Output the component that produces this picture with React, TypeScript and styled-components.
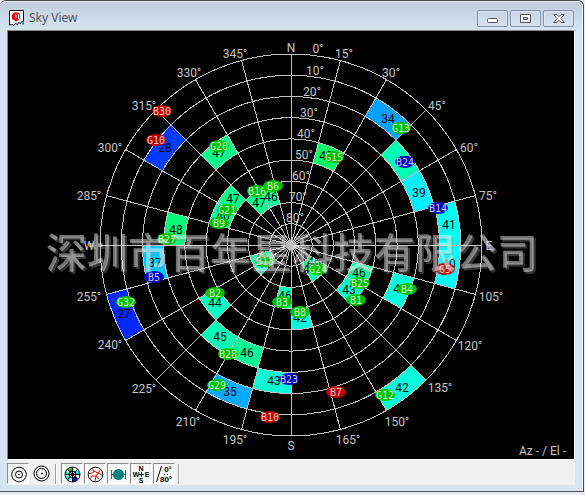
import React from "react";
import styled, { createGlobalStyle } from "styled-components";

const GlobalStyle = createGlobalStyle`
  * { box-sizing: border-box; }
  html, body, #root { height: 100%; }
  body { margin: 0; background: #e9ebee; overflow: hidden; }
`;

const Desktop = styled.div`
  height: 100%;
  display: flex;
  padding: 0 1px 3px 0;
`;

const Window = styled.main`
  flex: 1;
  min-width: 0;
  display: flex;
  flex-direction: column;
  padding: 0 8px 6px 7px;
  border: 1px solid #4a4a50;
  border-left: 0;
  border-radius: 6px 6px 0 0;
  background: linear-gradient(#bfcddc 0, #d7e4f1 30px, #d7e4f1 100%);
  box-shadow: inset -1px 0 #f4f9ff, inset 0 1px #dfe8f1;
`;

const TitleBar = styled.header`
  flex: none;
  height: 29px;
  padding: 5px 1px 0 2px;
  display: flex;
  align-items: center;
  gap: 4px;
`;

const Title = styled.h1`
  flex: 1;
  margin: 0;
  font: 400 12px/16px "Noto Sans", "Open Sans", sans-serif;
  color: #4d565f;
`;

const Controls = styled.div`
  display: flex;
  gap: 2px;
`;

const ControlButton = styled.button`
  width: 31px;
  height: 17px;
  padding: 0;
  display: grid;
  place-items: center;
  border: 1px solid #8191ae;
  border-radius: 2px;
  background: linear-gradient(#c9d6e5, #d5e1ee);
  box-shadow: inset 0 0 0 1px #d8e3ef;
`;

const Plot = styled.section`
  flex: 1;
  min-height: 0;
  display: flex;
  border: 1px solid;
  border-color: #858585 #ffffff #ffffff #858585;
  background: #000000;
`;

const Chart = styled.svg`
  flex: 1;
  min-width: 0;
  width: 100%;
  height: 100%;
  display: block;
`;

const Grid = styled.g`
  fill: none;
  stroke: #c0c0c0;
  stroke-width: 1px;
  shape-rendering: crispEdges;
`;

const AxisText = styled.text`
  font: 12px Roboto, "Liberation Sans", sans-serif;
  fill: #c4c4c4;
  text-anchor: middle;
`;

const CellText = styled(AxisText)`
  fill: #000000;
`;

const Readout = styled.text`
  font: 12px Roboto, "Liberation Sans", sans-serif;
  fill: #c4c4c4;
  text-anchor: end;
`;

const SatText = styled.text`
  font: 10px "DejaVu Sans Mono", monospace;
  fill: #ffffff;
  fill-opacity: 0.8;
  text-anchor: middle;
`;

const Watermark = styled.text`
  font: 500 41px "Noto Sans CJK SC", sans-serif;
  fill: #ffffff;
  fill-opacity: 0.45;
  text-anchor: middle;
  filter: drop-shadow(2px 2px 0 rgba(150, 150, 150, 0.8));
`;

const ToolBar = styled.div`
  flex: none;
  height: 25px;
  padding: 3px 0 1px;
  display: flex;
  gap: 1px;
  background: #f0f0f0;
`;

const ToolButton = styled.button<{ $on: boolean }>`
  width: 22px;
  height: 21px;
  padding: 0;
  display: grid;
  place-items: center;
  border: 1px solid;
  border-color: ${(p) => (p.$on ? "#8c8c8c #ffffff #ffffff #8c8c8c" : "transparent")};
  background: ${(p) => (p.$on ? "#f8f8f8" : "transparent")};
`;

const ToolDivider = styled.span`
  width: 2px;
  margin: 1px 3px 0 2px;
  border-left: 1px solid #a0a0a0;
  border-right: 1px solid #ffffff;
`;

const Icon = styled.svg`
  display: block;
`;

const IconText = styled.text<{ $size: number }>`
  font: 700 ${(p) => p.$size}px "Liberation Sans", sans-serif;
  fill: #000000;
  text-anchor: middle;
`;

const RING = 191 / 9;

const point = (az: number, r: number) => {
  const a = (az * Math.PI) / 180;
  return [r * Math.sin(a), -r * Math.cos(a)];
};

const sector = (az: number, inner: number) => {
  const r0 = inner * RING;
  const r1 = r0 + RING;
  const [ax, ay] = point(az, r0);
  const [bx, by] = point(az, r1);
  const [cx, cy] = point(az + 15, r1);
  const [dx, dy] = point(az + 15, r0);
  return `M${ax} ${ay}L${bx} ${by}A${r1} ${r1} 0 0 1 ${cx} ${cy}L${dx} ${dy}A${r0} ${r0} 0 0 0 ${ax} ${ay}Z`;
};

// azimuth start, inner ring, colour, signal value, value x, value y
type Cell = [number, number, string, number, number, number];
const cells: Cell[] = [
  [30, 7, "#00a0ff", 34, 97, -126],
  [45, 6, "#00ffb4", 45, 112, -84],
  [60, 6, "#00f0ff", 39, 128, -52],
  [75, 7, "#00fff0", 41, 158, -20],
  [90, 7, "#00fffa", 40, 158, 19],
  [15, 4, "#00ff64", 49, 35, -89],
  [300, 7, "#003cff", 28, -126, -97],
  [315, 5, "#00ff8c", 47, -72, -92],
  [300, 3, "#00ff8c", 47, -58, -46],
  [285, 3, "#00ff96", 46, -68, -29],
  [315, 2, "#00ff8c", 47, -32, -42],
  [330, 2, "#00ffa0", 46, -20, -48],
  [270, 5, "#00ff78", 48, -115, -15],
  [255, 6, "#00c8ff", 37, -136, 18],
  [240, 8, "#0028ff", 27, -167, 69],
  [225, 4, "#00ffc0", 44, -76, 58],
  [225, 1, "#00ffc0", 44, -27, 19],
  [240, 1, "#00ffa0", 46, -30, 14],
  [180, 2, "#00ffb4", 46, -6, 51],
  [165, 3, "#00ffdc", 42, 9, 73],
  [120, 1, "#00ffa0", 46, 23, 17],
  [135, 1, "#00ffa0", 45, 19, 24],
  [105, 3, "#00ffa0", 46, 68, 28],
  [120, 3, "#00ffd0", 43, 58, 45],
  [105, 5, "#00ffdc", 42, 109, 44],
  [210, 5, "#00ffb4", 45, -71, 92],
  [195, 5, "#00ff96", 46, -44, 108],
  [180, 6, "#00ffd2", 43, -17, 136],
  [195, 7, "#00aaff", 35, -61, 147],
  [135, 8, "#00ffdc", 42, 111, 143],
];

const RED = "#c00000";
const GREEN = "#00c000";
const BLUE = "#0000c0";

type Sat = [string, number, number, string];
const satellites: Sat[] = [
  ["B30", -129, -134, RED], ["G10", -135, -105, RED], ["G13", 110, -117, GREEN],
  ["B24", 114, -83, BLUE], ["G15", 43, -88, GREEN], ["G20", -72, -99, GREEN],
  ["B16", -34, -54, GREEN], ["B6", -18, -59, GREEN], ["G21", -64, -35, GREEN],
  ["B9", -72, -22, GREEN], ["B27", -124, -6, GREEN], ["B5", -137, 32, BLUE],
  ["B13", -26, 16, GREEN], ["G24", 27, 24, GREEN], ["G32", -165, 57, GREEN],
  ["B2", -76, 48, GREEN], ["B3", -9, 57, GREEN], ["B8", 9, 67, GREEN],
  ["B25", 69, 38, GREEN], ["B1", 65, 55, GREEN], ["B4", 116, 44, GREEN],
  ["B14", 147, -37, BLUE], ["G5", 154, 24, RED], ["G12", 94, 150, GREEN],
  ["B28", -63, 109, GREEN], ["G29", -74, 140, GREEN], ["B10", -21, 172, RED],
  ["B23", -2, 134, BLUE], ["B7", 45, 147, RED],
];

const axisLabels: [string, number, number][] = [
  ["N", 0, -198], ["0°", 27, -197], ["15°", 53, -192], ["30°", 100, -173],
  ["45°", 146, -140], ["60°", 178, -98], ["75°", 197, -50], ["E", 198, 0],
  ["105°", 200, 51], ["120°", 179, 100], ["135°", 149, 142], ["150°", 106, 176],
  ["165°", 57, 194], ["S", 0, 200], ["195°", -56, 194], ["210°", -103, 176],
  ["225°", -147, 143], ["240°", -181, 99], ["255°", -202, 51], ["W", -202, 0],
  ["285°", -202, -50], ["300°", -181, -98], ["315°", -147, -140],
  ["330°", -102, -173], ["345°", -56, -192],
  ["10°", 24, -175], ["20°", 21, -154], ["30°", 18, -133], ["40°", 15, -112],
  ["50°", 13, -91], ["60°", 10, -70], ["70°", 7, -49], ["80°", 4, -28],
];

const rings = [1, 2, 3, 4, 5, 6, 7, 8, 9];
const spokes = Array.from({ length: 24 }, (_, i) => i * 15);

function SkyPlot() {
  return (
    <Chart viewBox="-283 -214 566 428" role="img" aria-label="Satellite sky plot">
      <g shapeRendering="crispEdges">
        {cells.map(([az, ring, color]) => (
          <path key={`${az}-${ring}`} d={sector(az, ring)} fill={color} />
        ))}
      </g>
      <Grid>
        {rings.map((n) => (
          <circle key={n} r={n * RING} />
        ))}
        {spokes.map((az) => {
          const [x, y] = point(az, 191);
          return <line key={az} x1="0" y1="0" x2={x} y2={y} />;
        })}
      </Grid>
      <path d="M0 -6L6 0L0 6L-6 0Z" fill="#c0c0c0" />
      {axisLabels.map(([label, x, y]) => (
        <AxisText key={`${label}${x}`} x={x} y={y + 5}>{label}</AxisText>
      ))}
      {cells.map(([az, ring, , value, x, y]) => (
        <CellText key={`${az}-${ring}`} x={x} y={y + 4}>{value}</CellText>
      ))}
      {satellites.map(([name, x, y, color]) => (
        <g key={name}>
          <ellipse cx={x} cy={y} rx="10" ry="6" fill={color} />
          <SatText x={x} y={y + 4}>{name}</SatText>
        </g>
      ))}
      <Readout x="275" y="210">Az - / El -</Readout>
      <Watermark x="1" y="23">深圳市百年星科技有限公司</Watermark>
    </Chart>
  );
}

const AppIcon = () => (
  <Icon width="16" height="16" viewBox="0 0 16 16" aria-hidden="true">
    <path d="M.5 .5H14.5V11.5L12.5 11.5L11.5 13.5L9.5 12.5L8.5 14.5L6.5 13.5L4.5 15.5L3.5 14.5L.5 15Z" fill="#fff" stroke="#111" />
    <path d="M2 3H13M2 6H13M2 9H13M2 12H8" stroke="#d4d4d4" />
    <path d="M5 2.500H9L11 4V8L9.500 10L7 11.500L5 10L3 9V5Z" fill="#f00010" />
    <path d="M6 5H7V8M9.500 4V9" fill="none" stroke="#fff" />
    <path d="M13 13.500H15" stroke="#008080" strokeWidth="2" />
  </Icon>
);

const MinIcon = () => (
  <Icon width="11" height="11" viewBox="0 0 11 11" aria-hidden="true">
    <rect x=".5" y="5.500" width="10" height="4" rx="1" fill="#fff" stroke="#535666" />
  </Icon>
);

const MaxIcon = () => (
  <Icon width="11" height="11" viewBox="0 0 11 11" aria-hidden="true">
    <path fillRule="evenodd" d="M.5 1.500H10.500V9.500H.5ZM3.500 4.500V6.500H7.500V4.500Z" fill="#fff" stroke="#535666" />
  </Icon>
);

const CloseIcon = () => (
  <Icon width="12" height="11" viewBox="0 0 12 11" aria-hidden="true">
    <path d="M.7 1.500H4L6 3.700L8 1.500H11.300L7.900 5.500L11.300 9.500H8L6 7.300L4 9.500H.7L4.100 5.500Z" fill="#fff" stroke="#535666" />
  </Icon>
);

const RingsIcon = () => (
  <Icon width="18" height="18" viewBox="0 0 18 18" aria-hidden="true">
    <g fill="none" stroke="#000">
      <circle cx="10" cy="9.500" r="7.300" />
      <circle cx="10" cy="9.500" r="3.500" />
    </g>
    <rect x="9" y="9" width="2" height="1" />
  </Icon>
);

const DoubleRingIcon = () => (
  <Icon width="18" height="18" viewBox="0 0 18 18" aria-hidden="true">
    <g fill="none" stroke="#000">
      <circle cx="9.500" cy="8.500" r="7.500" />
      <circle cx="9.500" cy="8.500" r="5" />
    </g>
    <rect x="9" y="8" width="2" height="1" />
  </Icon>
);

const ColorGlobeIcon = () => (
  <Icon width="18" height="18" viewBox="0 0 18 18" aria-hidden="true">
    <circle cx="9.500" cy="9.500" r="7.500" fill="#fff" />
    <path d="M9 8L4.500 4.500L7 2.500H10V6Z" fill="#00c800" />
    <path d="M6 8L3 6L2 9L6 9.500ZM12.500 5.500L16 6L17 9L13 9ZM3 11L6 11L8 13L6 16L3 13Z" fill="#00e4f0" />
    <path d="M10 12L13 11.500L15 13.500L12 16.500H10Z" fill="#0000e0" />
    <path d="M9.500 2.500V16.500M2.500 9.500H16.500M4.500 4.500L14.500 14.500M14.500 4.500L4.500 14.500" stroke="#000" fill="none" shapeRendering="crispEdges" />
    <circle cx="9.500" cy="9.500" r="3.500" fill="none" stroke="#000" />
    <circle cx="9.500" cy="9.500" r="7.500" fill="none" stroke="#000" />
  </Icon>
);

const TrackGlobeIcon = () => (
  <Icon width="18" height="18" viewBox="0 0 18 18" aria-hidden="true">
    <circle cx="9.500" cy="9.500" r="7.300" fill="#fff" stroke="#000" />
    <path d="M6 3L8 6L6.500 8L3 8.500M8 6L12 8L14 5M12 8L10 11L13 14.500M10 11L6 11L4 14M10 11L9 16M12 8L16 10" fill="none" stroke="#f00000" />
  </Icon>
);

const SatelliteIcon = () => (
  <Icon width="18" height="18" viewBox="0 0 18 18" aria-hidden="true">
    <circle cx="9.500" cy="9.500" r="5.500" fill="#008080" />
    <path d="M2.500 5V14M16.500 5V14M2.500 9.500H16.500" stroke="#008080" shapeRendering="crispEdges" />
  </Icon>
);

const CompassIcon = () => (
  <Icon width="18" height="18" viewBox="0 0 18 18" aria-hidden="true">
    <IconText $size={7} x="9" y="6">N</IconText>
    <IconText $size={7} x="4" y="12">W</IconText>
    <IconText $size={7} x="15" y="12">E</IconText>
    <IconText $size={7} x="9" y="18">S</IconText>
    <path d="M9.500 7V12M7 9.500H12" stroke="#000" shapeRendering="crispEdges" />
  </Icon>
);

const ElevationIcon = () => (
  <Icon width="18" height="18" viewBox="0 0 18 18" aria-hidden="true">
    <path d="M6.500 1L1.500 17" stroke="#000" />
    <IconText $size={8} x="13" y="7">0°</IconText>
    <IconText $size={8} x="11" y="17">80°</IconText>
    <path d="M9 9.500H10M12 9.500H13" stroke="#000" shapeRendering="crispEdges" />
  </Icon>
);

export default function App() {
  return (
    <>
      <GlobalStyle />
      <Desktop>
        <Window>
          <TitleBar>
            <AppIcon />
            <Title>Sky View</Title>
            <Controls>
              <ControlButton aria-label="Minimize"><MinIcon /></ControlButton>
              <ControlButton aria-label="Maximize"><MaxIcon /></ControlButton>
              <ControlButton aria-label="Close"><CloseIcon /></ControlButton>
            </Controls>
          </TitleBar>
          <Plot>
            <SkyPlot />
          </Plot>
          <ToolBar role="toolbar" aria-label="Sky view options">
            <ToolButton $on aria-pressed="true" aria-label="Linear elevation"><RingsIcon /></ToolButton>
            <ToolButton $on={false} aria-pressed="false" aria-label="Cosine elevation"><DoubleRingIcon /></ToolButton>
            <ToolDivider />
            <ToolButton $on aria-pressed="true" aria-label="Signal colours"><ColorGlobeIcon /></ToolButton>
            <ToolButton $on aria-pressed="true" aria-label="Tracks"><TrackGlobeIcon /></ToolButton>
            <ToolButton $on aria-pressed="true" aria-label="Satellites"><SatelliteIcon /></ToolButton>
            <ToolButton $on aria-pressed="true" aria-label="Compass labels"><CompassIcon /></ToolButton>
            <ToolButton $on aria-pressed="true" aria-label="Elevation labels"><ElevationIcon /></ToolButton>
            <ToolDivider />
          </ToolBar>
        </Window>
      </Desktop>
    </>
  );
}
